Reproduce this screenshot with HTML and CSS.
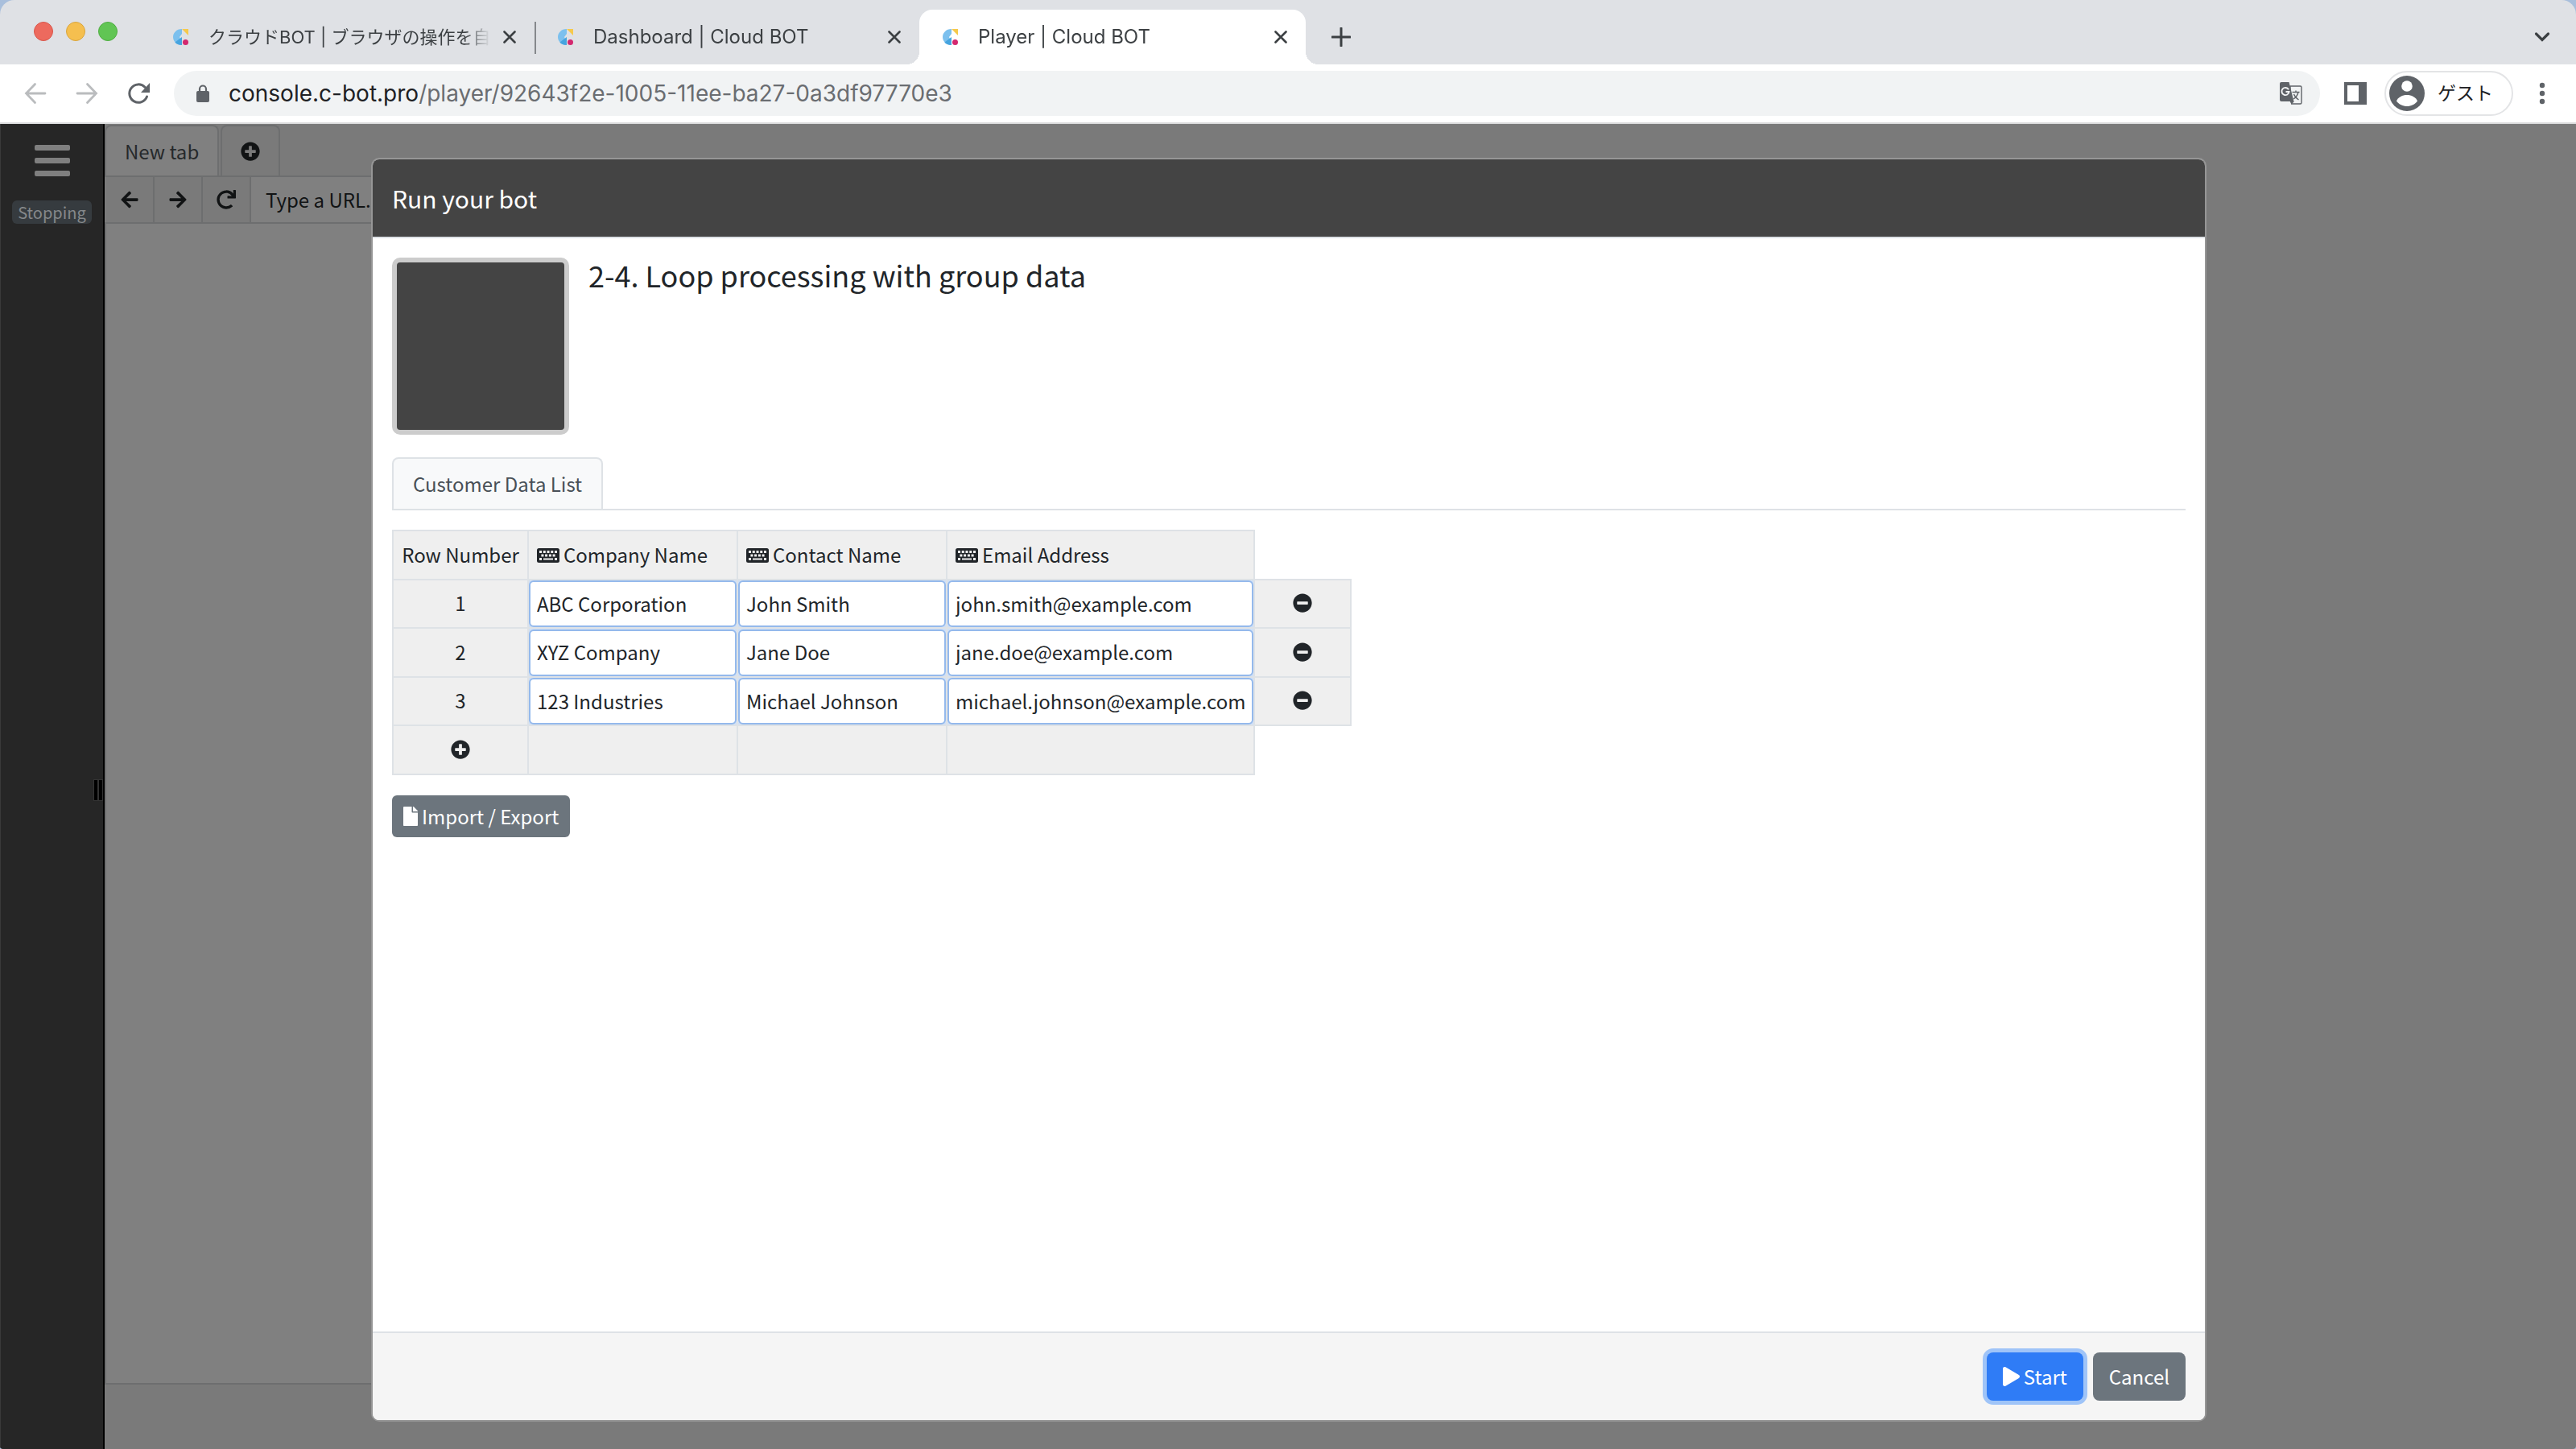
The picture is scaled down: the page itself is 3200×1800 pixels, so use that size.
FILE: index.html
```html
<!DOCTYPE html>
<html lang="ja">
<head>
  <meta charset="UTF-8">
  <title>Player | Cloud BOT</title>
  <link rel="stylesheet" href="styles.css">
</head>
<body>
  <!-- アイコン定義 -->
  <svg class="icon-defs" aria-hidden="true">
    <symbol id="favicon" viewBox="0 0 20 20">
      <path d="M11 0C4 0 0 5 0 10s4 10 11 10V16L8 10l3-4z" fill="#7cc0ee"/>
      <path d="M11 10v10C7 20 4 18.500 2.500 16.500z" fill="#46a4df"/>
      <path d="M11 0h8v8z" fill="#f6c94c"/>
      <circle cx="15.500" cy="16.500" r="3.500" fill="#d3286f"/>
    </symbol>
    <symbol id="close" viewBox="0 0 16 16">
      <path d="M1.500 1.500l13 13M14.500 1.500l-13 13" stroke="currentColor" stroke-width="2.600" stroke-linecap="round"/>
    </symbol>
    <symbol id="plus-circle" viewBox="0 0 512 512">
      <path fill="currentColor" d="M256 8C119 8 8 119 8 256s111 248 248 248 248-111 248-248S393 8 256 8zm144 276c0 6.600-5.400 12-12 12h-92v92c0 6.600-5.400 12-12 12h-56c-6.600 0-12-5.400-12-12v-92h-92c-6.600 0-12-5.400-12-12v-56c0-6.600 5.400-12 12-12h92v-92c0-6.600 5.400-12 12-12h56c6.600 0 12 5.400 12 12v92h92c6.600 0 12 5.400 12 12v56z"/>
    </symbol>
    <symbol id="minus-circle" viewBox="0 0 512 512">
      <path fill="currentColor" d="M256 8C119 8 8 119 8 256s111 248 248 248 248-111 248-248S393 8 256 8zM124 296c-6.600 0-12-5.400-12-12v-56c0-6.600 5.400-12 12-12h264c6.600 0 12 5.400 12 12v56c0 6.600-5.400 12-12 12H124z"/>
    </symbol>
    <symbol id="arrow" viewBox="0 0 448 512">
      <path fill="currentColor" d="M257.500 445.100l-22.200 22.200c-9.400 9.400-24.600 9.400-33.900 0L7 273c-9.400-9.400-9.400-24.600 0-33.900L201.400 44.700c9.400-9.400 24.600-9.400 33.900 0l22.200 22.200c9.500 9.500 9.300 25-.4 34.300L136.600 216H424c13.300 0 24 10.700 24 24v32c0 13.300-10.700 24-24 24H136.600l120.500 114.800c9.800 9.300 10 24.800.4 34.300z"/>
    </symbol>
    <symbol id="redo" viewBox="0 0 512 512">
      <path fill="currentColor" d="M500.330 0h-47.410a12 12 0 0 0-12 12.570l4 82.760A247.420 247.420 0 0 0 256 8C119.340 8 7.900 119.530 8 256.190 8.100 393.070 119.100 504 256 504a247.100 247.100 0 0 0 166.180-63.910 12 12 0 0 0 .48-17.430l-34-34a12 12 0 0 0-16.380-.55A176 176 0 1 1 402.100 157.800l-101.530-4.870a12 12 0 0 0-12.570 12v47.410a12 12 0 0 0 12 12h200.330a12 12 0 0 0 12-12V12a12 12 0 0 0-12-12z"/>
    </symbol>
    <symbol id="keyboard" viewBox="0 0 28 18">
      <rect width="28" height="18" rx="2.500" fill="#212529"/>
      <path fill="#efefef" d="M3 3h3v3H3zM7.750 3h3v3h-3zM12.500 3h3v3h-3zM17.250 3h3v3h-3zM22 3h3v3h-3zM5.400 7.500h3v3h-3zM10.100 7.500h3v3h-3zM14.900 7.500h3v3h-3zM19.600 7.500h3v3h-3zM3 12h3v3H3zM8 12.500h12v2H8zM22 12h3v3h-3z"/>
    </symbol>
  </svg>

  <div class="window">
    <!-- タブバー -->
    <div class="tab-strip">
      <div class="lights">
        <span class="light red"></span>
        <span class="light yellow"></span>
        <span class="light green"></span>
      </div>
      <div class="tab divided">
        <svg class="favicon"><use href="#favicon"/></svg>
        <span class="tab-title ja">クラウドBOT | ブラウザの操作を自</span>
        <button class="icon-btn" aria-label="閉じる"><svg class="close"><use href="#close"/></svg></button>
      </div>
      <div class="tab">
        <svg class="favicon"><use href="#favicon"/></svg>
        <span class="tab-title">Dashboard | Cloud BOT</span>
        <button class="icon-btn" aria-label="閉じる"><svg class="close"><use href="#close"/></svg></button>
      </div>
      <div class="tab active">
        <svg class="favicon"><use href="#favicon"/></svg>
        <span class="tab-title">Player | Cloud BOT</span>
        <button class="icon-btn" aria-label="閉じる"><svg class="close"><use href="#close"/></svg></button>
      </div>
      <button class="icon-btn new-tab" aria-label="新しいタブ">
        <svg width="24" height="24" viewBox="0 0 24 24"><path d="M12 1v22M1 12h22" stroke="currentColor" stroke-width="3" stroke-linecap="round"/></svg>
      </button>
      <button class="icon-btn tab-search" aria-label="タブを検索">
        <svg width="20" height="14" viewBox="0 0 20 14"><path d="M2.500 3l7.500 7.500L17.500 3" fill="none" stroke="currentColor" stroke-width="3.200" stroke-linecap="round"/></svg>
      </button>
    </div>

    <!-- ツールバー -->
    <div class="toolbar">
      <div class="nav-buttons">
        <button class="icon-btn disabled" aria-label="戻る">
          <svg width="28" height="28" viewBox="0 0 28 28"><path d="M13.500 2.500L2.500 14l11 11.500M2.500 14H26" fill="none" stroke="currentColor" stroke-width="2.800" stroke-linecap="round"/></svg>
        </button>
        <button class="icon-btn disabled" aria-label="進む">
          <svg width="28" height="28" viewBox="0 0 28 28"><path d="M14.500 2.500l11 11.500-11 11.500M25.500 14H2" fill="none" stroke="currentColor" stroke-width="2.800" stroke-linecap="round"/></svg>
        </button>
        <button class="icon-btn" aria-label="再読み込み">
          <svg width="28" height="28" viewBox="0 0 28 28"><path d="M24.500 18A11.200 11.200 0 1 1 22 6.200" fill="none" stroke="currentColor" stroke-width="3" stroke-linecap="round"/><path d="M28 1v12H17z" fill="currentColor"/></svg>
        </button>
      </div>
      <div class="omnibox">
        <svg width="16" height="22" viewBox="0 0 16 22"><rect y="8" width="16" height="14" rx="2" fill="#5f6368"/><path d="M4 9V5.500a4 4 0 0 1 8 0V9" fill="none" stroke="#5f6368" stroke-width="2.200"/></svg>
        <div class="url"><span class="host">console.c-bot.pro</span>/player/92643f2e-1005-11ee-ba27-0a3df97770e3</div>
        <button class="icon-btn" aria-label="翻訳">
          <svg width="28" height="28" viewBox="0 0 28 28">
            <path d="M13 5h12.500a1.500 1.500 0 0 1 1.500 1.500v19a1.500 1.500 0 0 1-1.500 1.500H15l-2-4z" fill="none" stroke="#5f6368" stroke-width="1.400"/>
            <path d="M2 0h9.500l6 24H2a2 2 0 0 1-2-2V2a2 2 0 0 1 2-2z" fill="#5f6368"/>
            <path d="M18 24l-4 4v-4z" fill="#5f6368"/>
            <path d="M11 9.200A4.600 4.600 0 1 0 11.600 12H7.500" fill="none" stroke="#f1f3f4" stroke-width="1.900"/>
            <path d="M15.500 12.500h9M20 10.500v2M23 12.500c-1 4-3.500 7-6 8.500M17.500 15c1 2.800 3.500 5.500 6 7" fill="none" stroke="#5f6368" stroke-width="1.400"/>
          </svg>
        </button>
      </div>
      <button class="icon-btn side-panel" aria-label="サイドパネル">
        <svg width="28" height="28" viewBox="0 0 28 28"><path d="M0 0h28v28H0zM4 4v20h14V4z" fill="#5f6368" fill-rule="evenodd"/></svg>
      </button>
      <button class="profile">
        <svg width="44" height="44" viewBox="0 0 44 44"><circle cx="22" cy="22" r="22" fill="#5f6368"/><circle cx="22" cy="13" r="6.800" fill="#fff"/><path d="M9 31.500c2-5 7.500-7.500 13-7.500s11 2.500 13 7.500c-3 4.300-8 6.500-13 6.500s-10-2.200-13-6.500z" fill="#fff"/></svg>
        ゲスト
      </button>
      <button class="icon-btn" aria-label="メニュー">
        <svg width="28" height="28" viewBox="0 0 28 28" fill="#5f6368"><circle cx="14" cy="4" r="3.200"/><circle cx="14" cy="14" r="3.200"/><circle cx="14" cy="24" r="3.200"/></svg>
      </button>
    </div>

    <!-- プレイヤー画面 -->
    <div class="page">
      <div class="sidebar">
        <button class="icon-btn menu-btn" aria-label="Menu">
          <svg width="44" height="40" viewBox="0 0 44 40" fill="#7f7f7f"><rect width="44" height="7" rx="2"/><rect y="16" width="44" height="7" rx="2"/><rect y="32" width="44" height="7" rx="2"/></svg>
        </button>
        <span class="status">Stopping</span>
        <div class="resizer"><span></span><span></span></div>
      </div>
      <div class="player">
        <div class="player-tabs">
          <button class="player-tab current">New tab</button>
          <button class="player-tab" aria-label="Add tab"><svg class="fa"><use href="#plus-circle"/></svg></button>
        </div>
        <div class="player-nav">
          <button aria-label="Back"><svg class="fa"><use href="#arrow"/></svg></button>
          <button aria-label="Forward"><svg class="fa flip"><use href="#arrow"/></svg></button>
          <button aria-label="Reload"><svg class="fa"><use href="#redo"/></svg></button>
          <input type="text" aria-label="URL" placeholder="Type a URL...">
        </div>
        <div class="player-view"></div>
        <div class="player-status"></div>
      </div>

      <!-- 実行モーダル -->
      <div class="overlay">
        <div class="modal" role="dialog" aria-labelledby="modalTitle">
          <div class="modal-header" id="modalTitle">Run your bot</div>
          <div class="modal-body">
            <div class="bot">
              <div class="bot-thumb"></div>
              <h1 class="bot-name">2-4. Loop processing with group data</h1>
            </div>
            <div class="group-tabs">
              <button class="group-tab">Customer Data List</button>
            </div>
            <table class="data">
              <colgroup>
                <col class="col-no"><col class="col-name"><col class="col-name"><col class="col-mail"><col class="col-del">
              </colgroup>
              <tbody>
                <tr class="head">
                  <th>Row Number</th>
                  <th class="field"><svg class="keyboard"><use href="#keyboard"/></svg>Company Name</th>
                  <th class="field"><svg class="keyboard"><use href="#keyboard"/></svg>Contact Name</th>
                  <th class="field"><svg class="keyboard"><use href="#keyboard"/></svg>Email Address</th>
                </tr>
                <tr>
                  <td>1</td>
                  <td class="cell"><input type="text" aria-label="Company Name 1" value="ABC Corporation"></td>
                  <td class="cell"><input type="text" aria-label="Contact Name 1" value="John Smith"></td>
                  <td class="cell"><input type="text" aria-label="Email Address 1" value="john.smith@example.com"></td>
                  <td><button class="icon-btn" aria-label="Remove row 1"><svg class="fa"><use href="#minus-circle"/></svg></button></td>
                </tr>
                <tr>
                  <td>2</td>
                  <td class="cell"><input type="text" aria-label="Company Name 2" value="XYZ Company"></td>
                  <td class="cell"><input type="text" aria-label="Contact Name 2" value="Jane Doe"></td>
                  <td class="cell"><input type="text" aria-label="Email Address 2" value="jane.doe@example.com"></td>
                  <td><button class="icon-btn" aria-label="Remove row 2"><svg class="fa"><use href="#minus-circle"/></svg></button></td>
                </tr>
                <tr>
                  <td>3</td>
                  <td class="cell"><input type="text" aria-label="Company Name 3" value="123 Industries"></td>
                  <td class="cell"><input type="text" aria-label="Contact Name 3" value="Michael Johnson"></td>
                  <td class="cell"><input type="text" aria-label="Email Address 3" value="michael.johnson@example.com"></td>
                  <td><button class="icon-btn" aria-label="Remove row 3"><svg class="fa"><use href="#minus-circle"/></svg></button></td>
                </tr>
                <tr>
                  <td><button class="icon-btn" aria-label="Add row"><svg class="fa"><use href="#plus-circle"/></svg></button></td>
                  <td></td>
                  <td></td>
                  <td></td>
                </tr>
              </tbody>
            </table>
            <button class="btn small">
              <svg width="18" height="24" viewBox="0 0 384 512"><path fill="currentColor" d="M224 136V0H24C10.700 0 0 10.700 0 24v464c0 13.300 10.700 24 24 24h336c13.300 0 24-10.700 24-24V160H248c-13.200 0-24-10.800-24-24zm160-14.100v6.100H256V0h6.100c6.400 0 12.500 2.500 17 7l97.900 98c4.500 4.500 7 10.600 7 16.900z"/></svg>
              Import / Export
            </button>
          </div>
          <div class="modal-footer">
            <button class="btn primary">
              <svg width="21" height="24" viewBox="0 0 448 512"><path fill="currentColor" d="M424.400 214.700L72.400 6.600C43.800-10.300 0 6.100 0 47.900V464c0 37.500 40.700 60.100 72.400 41.300l352-208c31.400-18.500 31.500-64.100 0-82.600z"/></svg>
              Start
            </button>
            <button class="btn">Cancel</button>
          </div>
        </div>
      </div>
    </div>
  </div>
</body>
</html>
```
FILE: styles.css
```css
* {
  box-sizing: border-box;
}
body {
  margin: 0;
  background: #a9bfdc;
  font-family: "Noto Sans CJK JP", sans-serif;
  font-size: 24px;
  line-height: 36px;
  color: #212529;
}
button, input {
  font: inherit;
  color: inherit;
  margin: 0;
}
svg {
  display: block;
  flex: none;
}
.icon-defs {
  position: absolute;
  width: 0;
  height: 0;
}
.icon-btn {
  display: flex;
  align-items: center;
  justify-content: center;
  padding: 0;
  border: none;
  background: none;
  color: inherit;
}
.window {
  display: flex;
  flex-direction: column;
  height: 100vh;
  border-radius: 18px 18px 4px 4px;
  overflow: hidden;
}

/* タブバー */
.tab-strip {
  display: flex;
  height: 80px;
  background: #dfe1e5;
  color: #3c4043;
  font-family: Inter, "Noto Sans CJK JP", sans-serif;
}
.lights {
  display: flex;
  align-items: center;
  gap: 16px;
  width: 186px;
  height: 78px;
  padding-left: 42px;
}
.light {
  width: 24px;
  height: 24px;
  border-radius: 50%;
}
.red {
  background: #ed6a5e;
  border: 1px solid #d8574c;
}
.yellow {
  background: #f5bf4f;
  border: 1px solid #d9a53d;
}
.green {
  background: #61c554;
  border: 1px solid #4fae42;
}
.tab {
  position: relative;
  display: flex;
  align-items: center;
  flex: 0 1 478px;
  min-width: 0;
  margin-top: 12px;
  padding: 0 23px 0 29px;
}
.divided::after {
  content: "";
  position: absolute;
  right: -2px;
  top: 15px;
  width: 2px;
  height: 40px;
  background: #85888c;
}
.active {
  flex-basis: 480px;
  background: #fff;
  border-radius: 16px 16px 0 0;
}
.active::before,
.active::after {
  content: "";
  position: absolute;
  bottom: 0;
  width: 16px;
  height: 16px;
}
.active::before {
  left: -16px;
  background: radial-gradient(circle at 0 0, transparent 16px, #fff 16px);
}
.active::after {
  right: -16px;
  background: radial-gradient(circle at 100% 0, transparent 16px, #fff 16px);
}
.favicon {
  width: 20px;
  height: 20px;
  margin-right: 24px;
}
.tab-title {
  flex: 1;
  margin-right: 16px;
  overflow: hidden;
  white-space: nowrap;
  -webkit-mask-image: linear-gradient(to left, transparent, #000 32px);
  mask-image: linear-gradient(to left, transparent, #000 32px);
}
.ja {
  font-size: 22px;
}
.close {
  width: 16px;
  height: 16px;
}
.new-tab {
  margin: 12px 0 0 32px;
}
.tab-search {
  margin: 12px 32px 0 auto;
}

/* ツールバー */
.toolbar {
  display: flex;
  align-items: center;
  height: 74px;
  padding: 0 28px 0 30px;
  background: #fff;
  border-bottom: 2px solid #dadbdc;
  color: #5f6368;
  font-family: Inter, "Noto Sans CJK JP", sans-serif;
}
.nav-buttons {
  display: flex;
  gap: 36px;
}
.disabled {
  color: #babcbe;
}
.omnibox {
  display: flex;
  align-items: center;
  flex: 1;
  gap: 24px;
  height: 56px;
  margin: 0 30px;
  padding: 0 22px 0 28px;
  border-radius: 28px;
  background: #f1f3f4;
}
.url {
  flex: 1;
  font-size: 28px;
  color: #6a6d71;
}
.host {
  color: #202124;
}
.profile {
  display: flex;
  align-items: center;
  gap: 16px;
  height: 56px;
  margin: 0 22px;
  padding: 0 23px 0 4px;
  border: 2px solid #e3e4e6;
  border-radius: 28px;
  background: #fff;
  color: #202124;
  font-size: 23px;
}

/* プレイヤー画面 */
.page {
  position: relative;
  display: flex;
  flex: 1;
  background: #7a7a7a;
}
.sidebar {
  position: relative;
  display: flex;
  flex-direction: column;
  align-items: center;
  width: 130px;
  background: #262626;
  border-left: 1px solid #3a3a3a;
  border-right: 2px solid #000;
}
.menu-btn {
  margin: 26px 0 29px;
}
.status {
  padding: 0 7px;
  border-radius: 6px;
  background: #363b3f;
  color: #85888a;
  font-size: 20px;
  line-height: 29px;
}
.resizer {
  position: absolute;
  right: 0;
  top: 50%;
  display: flex;
  gap: 2px;
  margin-top: -9px;
  padding: 1px;
  background: #333;
}
.resizer span {
  width: 4px;
  height: 25px;
  background: #000;
}
.player {
  display: flex;
  flex-direction: column;
  flex: 1;
  margin-right: 600px;
}
.player-tabs {
  display: flex;
  gap: 2px;
  height: 66px;
  padding-top: 1px;
  border-bottom: 2px solid #6d6e6f;
}
.player-tab {
  display: flex;
  align-items: center;
  padding: 0 23px;
  border: 2px solid #6d6e6f;
  border-bottom: none;
  border-radius: 8px 8px 0 0;
  background: none;
  color: #111314;
}
.current {
  background: #808080;
  color: #26292b;
}
.fa {
  width: 24px;
  height: 24px;
}
.flip {
  transform: scaleX(-1);
}
.player-nav {
  display: flex;
  height: 58px;
  padding-left: 2px;
  border-bottom: 2px solid #6d6e6f;
}
.player-nav button {
  display: flex;
  align-items: center;
  justify-content: center;
  width: 60px;
  padding: 0;
  border: none;
  border-right: 2px solid #6d6e6f;
  background: none;
  color: #111314;
}
.player-nav input {
  flex: 1;
  padding: 0 18px;
  border: none;
  background: #808080;
}
.player-nav input::placeholder {
  color: #111314;
  opacity: 1;
}
.player-view {
  flex: 1;
  background: #808080;
  border-left: 2px solid #6d6e6f;
  border-bottom: 2px solid #6d6e6f;
}
.player-status {
  height: 80px;
}

/* モーダル */
.overlay {
  position: absolute;
  inset: 0;
  display: flex;
  justify-content: center;
  padding: 42px 24px 34px 26px;
}
.modal {
  display: flex;
  flex-direction: column;
  width: 100%;
  max-width: 2280px;
  border: 2px solid #969696;
  border-radius: 10px;
  background: #fff;
  overflow: hidden;
}
.modal-header {
  padding: 28px 24px;
  background: #444;
  border-bottom: 2px solid #dee2e6;
  color: #fff;
  font-size: 30px;
  line-height: 40px;
}
.modal-body {
  flex: 1;
  padding: 24px;
}
.bot {
  display: flex;
  gap: 24px;
}
.bot-thumb {
  width: 220px;
  height: 220px;
  border: 6px solid #ccc;
  border-radius: 10px;
  background: #444;
}
.bot-name {
  margin: 0;
  font-size: 36px;
  font-weight: normal;
  line-height: 42px;
}
.group-tabs {
  display: flex;
  margin: 28px 0 24px;
  border-bottom: 2px solid #dee2e6;
}
.group-tab {
  padding: 13px 24px;
  border: 2px solid #dee2e6;
  border-bottom: none;
  border-radius: 8px 8px 0 0;
  background: #f8f9fa;
  color: #495057;
}
.data {
  table-layout: fixed;
  width: 1190px;
  border-collapse: collapse;
}
.col-no {
  width: 168px;
}
.col-name {
  width: 260px;
}
.col-mail {
  width: 382px;
}
.col-del {
  width: 120px;
}
.data tr {
  height: 60px;
}
.data tr:nth-child(odd) {
  height: 61px;
}
.data .head {
  height: 60px;
}
.data th,
.data td {
  padding: 0 10px 2px;
  border: 2px solid #dee2e6;
  background: #efefef;
  font-weight: normal;
  text-align: center;
  white-space: nowrap;
}
.data .field {
  text-align: left;
}
.data .cell {
  padding: 0;
  background: #cfe0f7;
}
.data .icon-btn {
  margin: 0 auto;
}
.keyboard {
  display: inline-block;
  width: 28px;
  height: 18px;
  margin-right: 5px;
}
.cell input {
  display: block;
  width: 100%;
  height: 58px;
  padding: 0 8px 2px;
  border: 2px solid #94b9ec;
  border-radius: 6px;
  background: #fff;
}
.btn {
  display: flex;
  align-items: center;
  gap: 5px;
  height: 60px;
  padding: 0 20px;
  border: none;
  border-radius: 8px;
  background: #6c757d;
  color: #fff;
}
.small {
  height: 52px;
  margin-top: 25px;
  padding: 0 14px;
  border-radius: 6px;
}
.primary {
  background: #2f7cf6;
  box-shadow: 0 0 0 5px #9fc4f8;
}
.modal-footer {
  display: flex;
  justify-content: flex-end;
  gap: 12px;
  padding: 24px;
  border-top: 2px solid #dee2e6;
  background: #f5f5f5;
}
```
